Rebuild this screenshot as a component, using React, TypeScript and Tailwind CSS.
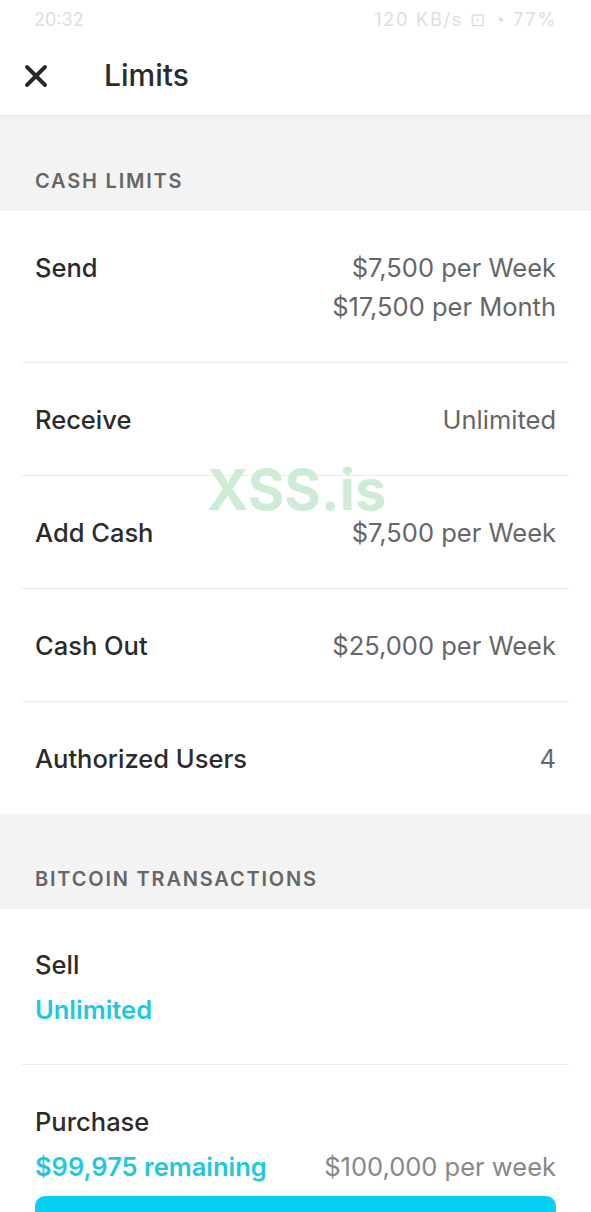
import { X } from 'lucide-react';

type Row = {
  label: string;
  values: string[];
};

const cashRows: Row[] = [
  { label: 'Send', values: ['$7,500 per Week', '$17,500 per Month'] },
  { label: 'Receive', values: ['Unlimited'] },
  { label: 'Add Cash', values: ['$7,500 per Week'] },
  { label: 'Cash Out', values: ['$25,000 per Week'] },
  { label: 'Authorized Users', values: ['4'] },
];

const SectionHeader = ({ title }: { title: string }) => (
  <div className="bg-[#f3f3f3] h-[95px] flex items-end px-[35px] pb-[18px]">
    <p className="text-[20px] leading-[24px] font-semibold tracking-[1.8px] text-[#666]">
      {title}
    </p>
  </div>
);

export default function App() {
  return (
    <div
      className="relative w-[591px] h-[1212px] overflow-hidden bg-white text-[#2b2b2b]"
      style={{ fontFamily: 'Inter, "Liberation Sans", sans-serif' }}
    >
      {/* status bar, mostly blanked out */}
      <div className="h-[36px] flex items-center justify-between px-[34px] pt-[4px] text-[18px] leading-[22px] text-[#bdbdbd] opacity-50">
        <span>20:32</span>
        <span className="tracking-widest">120 KB/s ⊡ ◔ 77%</span>
      </div>

      <header className="h-[80px] flex items-center gap-[50px] px-[18px] border-b border-[#e6e6e6]">
        <X size={36} strokeWidth={2.6} className="text-[#2b2b2b]" />
        <h1 className="text-[30px] font-medium">Limits</h1>
      </header>

      <SectionHeader title="CASH LIMITS" />

      <div>
        {cashRows.map((row, i) => (
          <div
            key={row.label}
            className={`mx-[22px] px-[13px] pt-[37px] pb-[36px] flex justify-between ${
              i < cashRows.length - 1 ? 'border-b border-[#ebebeb]' : ''
            }`}
          >
            <p className="text-[25.5px] leading-[39px] font-medium">{row.label}</p>
            <div className="text-right">
              {row.values.map((v) => (
                <p key={v} className="text-[25.5px] leading-[39px] text-[#666]">
                  {v}
                </p>
              ))}
            </div>
          </div>
        ))}
      </div>

      <SectionHeader title="BITCOIN TRANSACTIONS" />

      <div>
        <div className="mx-[22px] px-[13px] pt-[36px] pb-[32px] border-b border-[#ebebeb]">
          <p className="text-[25.5px] leading-[39px] font-medium">Sell</p>
          <p className="mt-[3px] text-[25.5px] leading-[45px] font-semibold text-[#1fc7e2]">Unlimited</p>
        </div>
        <div className="mx-[22px] px-[13px] pt-[37px]">
          <p className="text-[25.5px] leading-[39px] font-medium">Purchase</p>
          <div className="mt-[3px] flex justify-between">
            <p className="text-[25.5px] leading-[45px] font-semibold text-[#1fc7e2]">$99,975 remaining</p>
            <p className="text-[25.5px] leading-[45px] text-[#888]">$100,000 per week</p>
          </div>
          <div className="mt-[7px] h-[24px] rounded-[10px] bg-[#05d0f2]" />
        </div>
      </div>

      {/* watermark */}
      <div className="absolute left-[207px] top-[458px] text-[56px] leading-[64px] font-bold text-[#cdebd5] pointer-events-none">
        XSS.is
      </div>
    </div>
  );
}
